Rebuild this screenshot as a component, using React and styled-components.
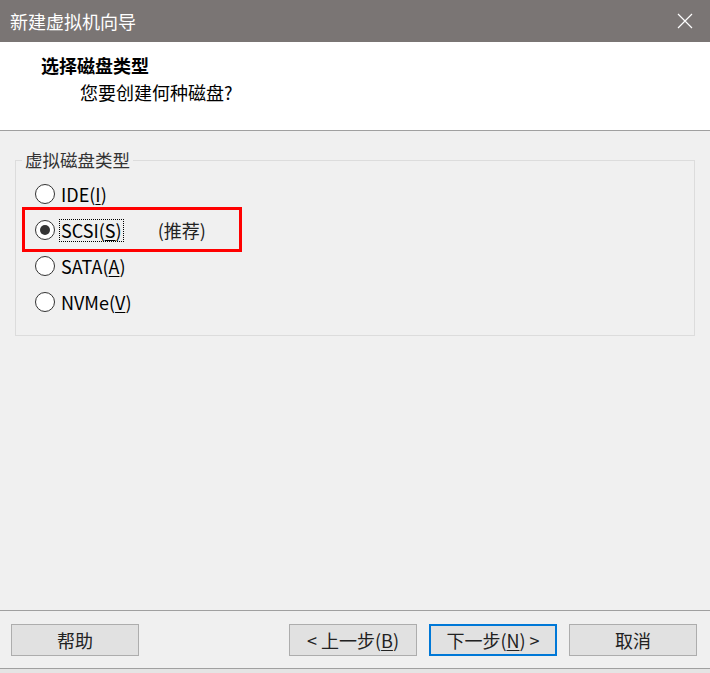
import React from "react";
import styled, { createGlobalStyle } from "styled-components";

const Global = createGlobalStyle`
  html, body { margin: 0; padding: 0; background: #f0f0f0; }
  body { font-family: "Noto Sans CJK SC", "Noto Sans", sans-serif; }
  * { box-sizing: border-box; }
`;

const Window = styled.div`
  width: 710px;
  height: 673px;
  display: flex;
  flex-direction: column;
  background: #f0f0f0;
  overflow: hidden;
`;

const TitleBar = styled.div`
  height: 42px;
  flex: none;
  background: #7a7574;
  color: #fff;
  display: flex;
  align-items: center;
  justify-content: space-between;
  padding: 0 17px 0 10px;
  font-size: 18px;
`;

const Header = styled.div`
  height: 89px;
  flex: none;
  background: #fff;
  border-bottom: 1px solid #a0a0a0;
  padding: 11px 0 0 41px;
`;

const HeaderTitle = styled.div`
  font-size: 18px;
  font-weight: 700;
  color: #000;
  line-height: 24px;
`;

const HeaderSub = styled.div`
  font-size: 18px;
  color: #000;
  line-height: 24px;
  margin-top: 3px;
  padding-left: 39px;
`;

const Content = styled.div`
  flex: 1;
  padding: 29px 15px 0 15px;
`;

const Group = styled.div`
  position: relative;
  height: 176px;
  border: 1px solid #dcdcdc;
  padding: 15px 0 0 19px;
`;

const Legend = styled.div`
  position: absolute;
  top: -12px;
  left: 6px;
  padding: 0 3px;
  background: #f0f0f0;
  font-size: 17.5px;
  line-height: 22px;
  color: #333;
`;

const Row = styled.label`
  height: 36px;
  display: flex;
  align-items: center;
  font-size: 18px;
  color: #000;
`;

const Radio = styled.span`
  width: 20px;
  height: 20px;
  border-radius: 50%;
  border: 1px solid #333;
  background: #fff;
  display: flex;
  align-items: center;
  justify-content: center;
  flex: none;
  margin-right: 4px;
  &::after {
    content: "";
    width: 10px;
    height: 10px;
    border-radius: 50%;
    background: #333;
    display: ${(p) => (p.$checked ? "block" : "none")};
  }
`;

const Label = styled.span`
  padding: 0 1px;
  line-height: 21px;
  border: 1px dotted ${(p) => (p.$focus ? "#000" : "transparent")};
`;

const Note = styled.span`
  margin-left: 34px;
  color: #222;
`;

const Highlight = styled.div`
  position: absolute;
  left: 6px;
  top: 46px;
  width: 220px;
  height: 45px;
  border: 3px solid #f00;
  pointer-events: none;
`;

const Footer = styled.div`
  height: 63px;
  flex: none;
  border-top: 1px solid #a0a0a0;
  display: flex;
  flex-direction: column;
`;

const ButtonBar = styled.div`
  height: 58px;
  border-bottom: 1px solid #a0a0a0;
  display: flex;
  align-items: flex-start;
  padding: 13px 13px 0 11px;
  gap: 12px;
`;

const Spacer = styled.div`
  flex: 1;
`;

const Button = styled.button`
  width: 128px;
  height: 32px;
  background: #e1e1e1;
  border: ${(p) => (p.$default ? "2px solid #0078d7" : "1px solid #adadad")};
  font-family: inherit;
  font-size: 18px;
  color: #222;
  padding: 0;
  display: flex;
  align-items: center;
  justify-content: center;
`;

const U = styled.span`
  text-decoration: underline;
  text-underline-offset: 2px;
`;

const BottomStrip = styled.div`
  flex: 1;
  background: #e4e4e4;
`;

const CloseIcon = () => (
  <svg width="16" height="16" viewBox="0 0 16 16">
    <path d="M1 1 L15 15 M15 1 L1 15" stroke="#fff" strokeWidth="1.2" fill="none" />
  </svg>
);

const options = [
  { key: "ide", text: "IDE(", u: "I", end: ")" },
  { key: "scsi", text: "SCSI(", u: "S", end: ")", checked: true, note: "(推荐)" },
  { key: "sata", text: "SATA(", u: "A", end: ")" },
  { key: "nvme", text: "NVMe(", u: "V", end: ")" },
];

export default function App() {
  return (
    <>
      <Global />
      <Window>
        <TitleBar>
          <span>新建虚拟机向导</span>
          <CloseIcon />
        </TitleBar>
        <Header>
          <HeaderTitle>选择磁盘类型</HeaderTitle>
          <HeaderSub>您要创建何种磁盘?</HeaderSub>
        </Header>
        <Content>
          <Group>
            <Legend>虚拟磁盘类型</Legend>
            {options.map((o) => (
              <Row key={o.key}>
                <Radio $checked={o.checked} />
                <Label $focus={o.checked}>
                  {o.text}
                  <U>{o.u}</U>
                  {o.end}
                </Label>
                {o.note && <Note>{o.note}</Note>}
              </Row>
            ))}
            <Highlight />
          </Group>
        </Content>
        <Footer>
          <ButtonBar>
            <Button>帮助</Button>
            <Spacer />
            <Button>
              &lt; 上一步(<U>B</U>)
            </Button>
            <Button $default>
              下一步(<U>N</U>) &gt;
            </Button>
            <Button>取消</Button>
          </ButtonBar>
          <BottomStrip />
        </Footer>
      </Window>
    </>
  );
}
